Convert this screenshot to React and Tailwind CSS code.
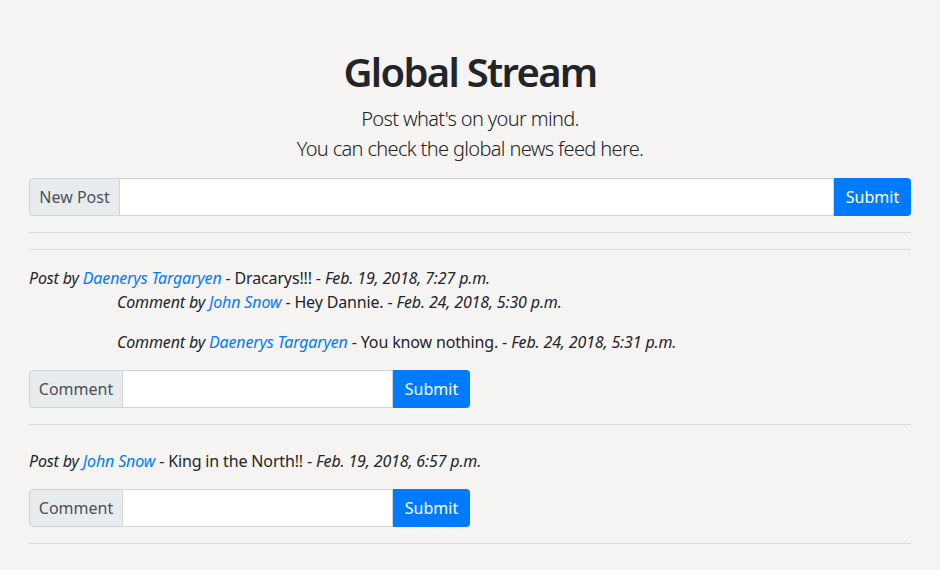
const FONT = { fontFamily: '"Noto Sans", "Open Sans", sans-serif' };

function InputGroup({ label, labelW, wide }) {
  return (
    <div className={`flex h-[38px] ${wide ? 'w-full' : 'w-[441px]'}`}>
      <span className={`flex items-center justify-center ${labelW} bg-[#e9ecef] text-[#495057] border border-[#ced4da] rounded-l-[4px] text-[16px]`}>{label}</span>
      <input className="flex-1 min-w-0 bg-white border border-l-0 border-[#ced4da] outline-none px-3" />
      <button className="w-[77px] bg-[#007bff] text-white rounded-r-[4px] text-[16px]">Submit</button>
    </div>
  );
}

function Hr({ className = '' }) {
  return <div className={`h-px bg-[#dcdbd9] ${className}`} />;
}

function Author({ name }) {
  return <a className="text-[#007bff] italic">{name}</a>;
}

const posts = [
  {
    author: 'Daenerys Targaryen', text: 'Dracarys!!!', date: 'Feb. 19, 2018, 7:27 p.m.',
    comments: [
      { author: 'John Snow', text: 'Hey Dannie.', date: 'Feb. 24, 2018, 5:30 p.m.' },
      { author: 'Daenerys Targaryen', text: 'You know nothing.', date: 'Feb. 24, 2018, 5:31 p.m.' },
    ],
  },
  { author: 'John Snow', text: 'King in the North!!', date: 'Feb. 19, 2018, 6:57 p.m.', comments: [] },
];

export default function App() {
  return (
    <div className="min-h-[570px] bg-[#f5f4f2] text-[#212529] text-[16px] leading-[24px]" style={FONT}>
      <div className="px-[29px] pt-[48px]">
        <h1 className="text-center text-[40px] leading-[48px] font-semibold tracking-[-1.7px] mb-2">Global Stream</h1>
        <p className="text-center text-[20px] leading-[30px] font-light tracking-[-0.65px]">Post what's on your mind.<br />You can check the global news feed here.</p>
        <div className="mt-[14px]">
          <InputGroup label="New Post" labelW="w-[91px]" wide />
        </div>
        <Hr className="mt-4" />
        <Hr className="mt-4" />
        {posts.map((p, i) => (
          <div key={i} className="tracking-[-0.15px]">
            <div className={i === 0 ? 'mt-4' : 'mt-6'}>
              <i>Post by </i><Author name={p.author} /> - {p.text} - <i>{p.date}</i>
            </div>
            {p.comments.map((c, j) => (
              <p key={j} className="ml-[88px] mb-4">
                <i>Comment by </i><Author name={c.author} /> - {c.text} - <i>{c.date}</i>
              </p>
            ))}
            <div className={p.comments.length ? 'tracking-normal' : 'mt-4 tracking-normal'}>
              <InputGroup label="Comment" labelW="w-[94px]" />
            </div>
            <Hr className="mt-4" />
          </div>
        ))}
      </div>
    </div>
  );
}
